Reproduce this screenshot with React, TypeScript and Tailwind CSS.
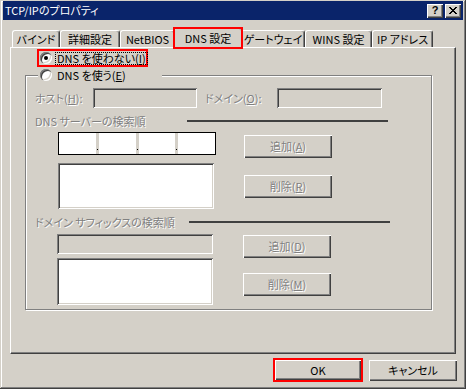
import React from "react";

const sunken =
  "shadow-[inset_1px_1px_#808080,inset_-1px_-1px_#ffffff,inset_2px_2px_#404040,inset_-2px_-2px_#d4d0c8]";
const raised =
  "shadow-[inset_1px_1px_#ffffff,inset_-1px_-1px_#404040,inset_-2px_-2px_#808080]";
const dim = "text-[#808080] [text-shadow:1px_1px_#ffffff]";

const Radio = ({ checked }: { checked?: boolean }) => (
  <span className="w-[12px] h-[12px] shrink-0 rounded-full bg-white shadow-[inset_1px_1px_#808080,inset_2px_2px_#404040,inset_-1px_-1px_#ffffff,inset_-2px_-2px_#d4d0c8] flex items-center justify-center">
    {checked && <span className="w-[4px] h-[4px] rounded-full bg-black" />}
  </span>
);

const Tab = ({ label, w }: { label: string; w: string }) => (
  <div
    className={`${w} h-[17px] rounded-t-[3px] border-t border-l border-r border-t-white border-l-white border-r-[#404040] shadow-[inset_-1px_0_#808080] flex items-center justify-center whitespace-nowrap`}
  >
    {label}
  </div>
);

const Btn = ({ children, className = "" }: { children: React.ReactNode; className?: string }) => (
  <div className={`w-[88px] h-[23px] bg-[#d4d0c8] ${raised} flex items-center justify-center whitespace-nowrap ${dim} ${className}`}>
    {children}
  </div>
);

const App = () => {
  return (
    <div className="w-[466px] h-[389px] bg-[#d4d0c8] text-[11px] leading-none text-black font-['Noto_Sans_CJK_JP',sans-serif] [font-feature-settings:'palt'] shadow-[inset_-1px_-1px_#404040,inset_1px_1px_#d4d0c8,inset_-2px_-2px_#808080,inset_2px_2px_#ffffff] overflow-hidden">
      {/* Title bar */}
      <div className="mx-[3px] pt-[1px]">
        <div className="h-[19px] bg-[#0a246a] flex items-center pl-[2px] pr-[2px]">
          <span className="text-white flex-1">TCP/IPのプロパティ</span>
          <div className={`w-[16px] h-[14px] bg-[#d4d0c8] ${raised} flex items-center justify-center font-bold text-[11px] font-['Liberation_Sans',sans-serif]`}>
            ?
          </div>
          <div className={`ml-[2px] w-[16px] h-[14px] bg-[#d4d0c8] ${raised} flex items-center justify-center`}>
            <svg width="8" height="7" viewBox="0 0 8 7" shapeRendering="crispEdges">
              <path d="M0 0h2v1h-2zM6 0h2v1h-2zM1 1h2v1h-2zM5 1h2v1h-2zM2 2h4v1h-4zM3 3h2v1h-2zM2 4h4v1h-4zM1 5h2v1h-2zM5 5h2v1h-2zM0 6h2v1h-2zM6 6h2v1h-2z" fill="#000" />
            </svg>
          </div>
        </div>
      </div>

      <div className="px-[10px]">
        {/* Tabs */}
        <div className="mt-[8px] ml-[2px] h-[19px] flex items-end">
          <Tab label="バインド" w="w-[48px]" />
          <Tab label="詳細設定" w="w-[60px]" />
          <Tab label="NetBIOS" w="w-[55px]" />
          <div className="relative z-10 -mx-[2px] -mb-[1px] w-[70px] h-[20px] bg-[#d4d0c8] rounded-t-[3px] border-t border-l border-r border-t-white border-l-white border-r-[#404040] shadow-[inset_-1px_0_#808080] flex items-start pt-[4px] justify-center whitespace-nowrap">
            DNS 設定
            <div className="absolute -top-[2px] -left-[1px] -right-[1px] -bottom-[1px] border-2 border-[#ff0000]" />
          </div>
          <Tab label="ゲートウェイ" w="w-[64px]" />
          <Tab label="WINS 設定" w="w-[67px]" />
          <Tab label="IP アドレス" w="w-[61px]" />
        </div>

        {/* Panel */}
        <div className="w-[446px] h-[307px] border border-t-white border-l-white border-r-[#404040] border-b-[#404040] shadow-[inset_-1px_-1px_#808080]">
          <div className="mt-[1px] ml-[26px] w-[111px] h-[18px] border-2 border-[#ff0000] flex items-center pl-[1px]">
            <Radio checked />
            <span className="ml-[4px] px-[1px] outline outline-1 outline-dotted outline-black whitespace-nowrap">
              DNS を使わない(<u>I</u>)
            </span>
          </div>

          {/* Group box */}
          <div className="relative mt-[8px] ml-[14px] w-[407px] h-[235px] border border-[#808080] shadow-[inset_1px_1px_#ffffff,1px_1px_#ffffff]">
            <div className="absolute left-[12px] -top-[7px] w-[124px] h-[12px] bg-[#d4d0c8] flex items-center pl-[2px] whitespace-nowrap">
              <Radio />
              <span className="ml-[5px]">
                DNS を使う(<u>E</u>)
              </span>
            </div>

            <div className="mt-[12px] h-[20px] flex items-center">
              <span className={`ml-[9px] w-[58px] ${dim} whitespace-nowrap`}>
                ホスト(<u>H</u>):
              </span>
              <div className={`w-[104px] h-[20px] ${sunken}`} />
              <span className={`ml-[8px] w-[72px] ${dim} whitespace-nowrap`}>
                ドメイン(<u>O</u>):
              </span>
              <div className={`w-[105px] h-[20px] ${sunken}`} />
            </div>

            <div className="mt-[5px] h-[16px] flex items-center">
              <span className={`ml-[9px] w-[152px] ${dim} whitespace-nowrap`}>DNS サーバーの検索順</span>
              <div className="w-[201px] h-[2px] bg-[#404040]" />
            </div>

            <div className="flex">
              <div className="ml-[32px] w-[158px] mt-[3px]">
                <div className="w-[158px] h-[23px] border border-black bg-white flex">
                  {[0, 1, 2, 3].map((i) => (
                    <React.Fragment key={i}>
                      {i > 0 && (
                        <div className="relative w-[3px] bg-[#d4d0c8]">
                          <span className="absolute bottom-[4px] left-[1px] w-[1px] h-[1px] bg-black" />
                        </div>
                      )}
                      <div className="flex-1 bg-white" />
                    </React.Fragment>
                  ))}
                </div>
                <div className={`mt-[8px] w-[156px] h-[46px] bg-white ${sunken}`} />
              </div>
              <div className="ml-[28px] flex flex-col">
                <Btn className="mt-[6px]">
                  追加(<u>A</u>)
                </Btn>
                <Btn className="mt-[17px]">
                  削除(<u>R</u>)
                </Btn>
              </div>
            </div>

            <div className="mt-[5px] h-[16px] flex items-center">
              <span className={`ml-[9px] w-[154px] ${dim} whitespace-nowrap`}>ドメイン サフィックスの検索順</span>
              <div className="w-[201px] h-[2px] bg-[#404040]" />
            </div>

            <div className="flex">
              <div className="ml-[31px] w-[156px]">
                <div className={`mt-[4px] w-[156px] h-[20px] ${sunken}`} />
                <div className={`mt-[4px] w-[156px] h-[47px] bg-white ${sunken}`} />
              </div>
              <div className="ml-[30px] flex flex-col">
                <Btn className="mt-[5px]">
                  追加(<u>D</u>)
                </Btn>
                <Btn className="mt-[15px]">
                  削除(<u>M</u>)
                </Btn>
              </div>
            </div>
          </div>
        </div>

        {/* Buttons */}
        <div className="mt-[4px] -mr-[1px] flex justify-end items-center">
          <div className="w-[90px] h-[24px] border-2 border-[#ff0000] flex">
            <div className={`w-[86px] h-[20px] bg-[#d4d0c8] ${raised} flex items-center justify-center`}>OK</div>
          </div>
          <div className={`ml-[6px] w-[88px] h-[21px] bg-[#d4d0c8] ${raised} flex items-center justify-center`}>キャンセル</div>
        </div>
      </div>
    </div>
  );
};

export default App;
